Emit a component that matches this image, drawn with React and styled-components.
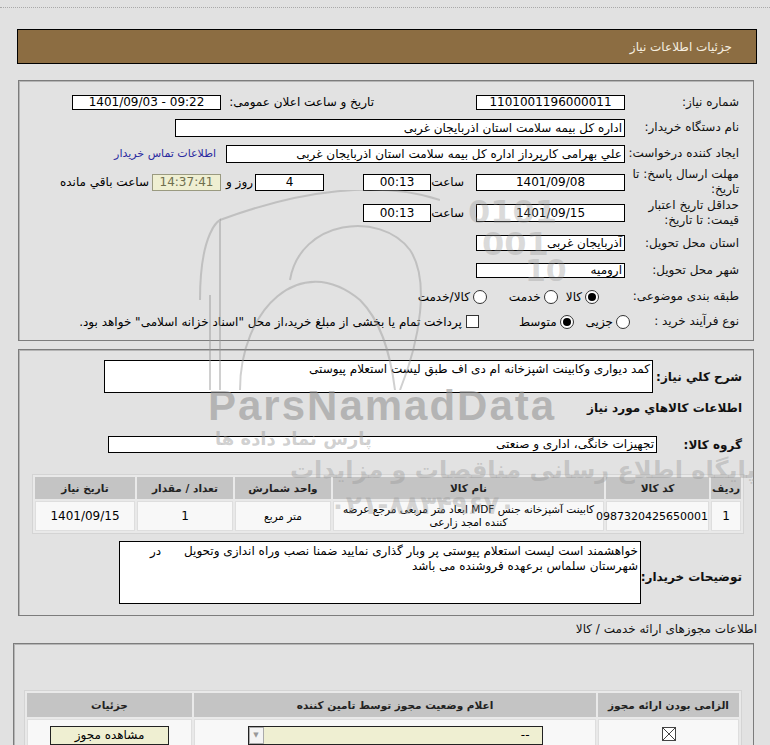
import React from 'react';
import styled, { createGlobalStyle } from 'styled-components';

const Global = createGlobalStyle`
  html, body { margin: 0; padding: 0; background: #e1e1e1; }
  body { font-family: "DejaVu Sans", Tahoma, sans-serif; font-size: 12px; color: #000; }
`;

const Page = styled.div`
  position: relative;
  direction: rtl;
  width: 770px;
  height: 745px;
  overflow: hidden;
  background: #e1e1e1;
  padding-top: 7px;
  box-sizing: border-box;
`;

const DottedRule = styled.div`
  border-top: 1px dotted #a9a9a9;
  margin-bottom: 21px;
`;

const TitleBar = styled.div`
  margin: 0 13px 0 17px;
  height: 35px;
  box-sizing: border-box;
  border: 1px solid #000;
  background: #8c6d42;
  color: #f6efe0;
  font-size: 12px;
  display: flex;
  align-items: center;
  padding-right: 24px;
`;

const Panel = styled.div`
  margin: ${p => p.$mt || 0}px ${p => p.$mr || 16}px 0 ${p => p.$ml || 18}px;
  border: 1px solid #7c7c7c;
  box-shadow: inset 1px 1px 0 #b5b5b5;
  background: #e2e2e2;
  padding: ${p => p.$pad};
  box-sizing: border-box;
  min-height: ${p => p.$minh || 0}px;
`;

const Row = styled.div`
  display: flex;
  align-items: center;
  height: ${p => p.$h}px;
  white-space: nowrap;
`;

const Label = styled.div`
  flex: none;
  width: 104px;
  margin-left: ${p => p.$gap ?? 10}px;
  text-align: right;
  line-height: 15px;
  font-size: 12px;
  color: #111;
`;

const Box = styled.div`
  flex: none;
  width: ${p => p.$w}px;
  height: ${p => p.$h || 17}px;
  margin-right: ${p => p.$mr || 0}px;
  box-sizing: border-box;
  border: 1px solid ${p => (p.$timer ? '#9a9a80' : '#000')};
  background: ${p => (p.$timer ? '#efefd2' : '#fff')};
  color: ${p => (p.$timer ? '#6e6e4e' : '#000')};
  text-align: ${p => p.$align || 'center'};
  direction: ${p => (p.$ltr ? 'ltr' : 'rtl')};
  line-height: ${p => (p.$h || 17) - 2}px;
  padding: 0 2px;
  overflow: hidden;
  font-size: 12px;
`;

const Text = styled.div`
  flex: none;
  width: ${p => (p.$w ? `${p.$w}px` : 'auto')};
  margin-right: ${p => p.$mr || 0}px;
  padding-right: ${p => p.$pr || 0}px;
  box-sizing: border-box;
  text-align: right;
  font-size: 12px;
`;

const Link = styled.a`
  margin-right: ${p => p.$mr || 0}px;
  color: #2a2aa0;
  text-decoration: none;
  font-size: 11px;
`;

const Option = styled.label`
  display: flex;
  align-items: center;
  margin-right: ${p => p.$mr || 0}px;
  font-size: 12px;
`;

const Radio = styled.span`
  flex: none;
  width: 12px;
  height: 12px;
  border-radius: 50%;
  border: 1px solid #333;
  background: #fff;
  margin-left: 3px;
  position: relative;
  &::after {
    content: '';
    display: ${p => (p.$on ? 'block' : 'none')};
    position: absolute;
    inset: 2px;
    border-radius: 50%;
    background: #000;
  }
`;

const Check = styled.span`
  flex: none;
  width: 11px;
  height: 11px;
  border: 1px solid #333;
  background: #fff;
  margin-left: 4px;
`;

const BlockRow = styled.div`
  display: flex;
  align-items: ${p => p.$align || 'center'};
  margin-top: ${p => p.$mt || 0}px;
  padding-right: 2px;
`;

const BoldLabel = styled.div`
  flex: none;
  width: ${p => p.$w}px;
  padding-top: ${p => p.$pt || 0}px;
  font-weight: bold;
  font-size: 12px;
  text-align: right;
  white-space: nowrap;
  color: #111;
`;

const TextArea = styled.div`
  flex: none;
  width: ${p => p.$w}px;
  height: ${p => p.$h}px;
  box-sizing: border-box;
  border: 1px solid #000;
  background: #fff;
  padding: ${p => p.$pad || '1px 2px'};
  font-size: 12px;
  line-height: 15px;
  text-align: right;
  overflow: hidden;
  white-space: nowrap;
`;

const Heading = styled.div`
  margin-top: ${p => p.$mt || 0}px;
  padding-right: 2px;
  font-weight: bold;
  font-size: 12px;
  line-height: 14px;
  color: #111;
`;

const Table = styled.table`
  width: 100%;
  margin-top: ${p => p.$mt || 0}px;
  border-collapse: separate;
  border-spacing: 2px;
  background: #e9e9e9;
  border: 1px solid #d4d4d4;
  table-layout: fixed;
`;

const Th = styled.th`
  width: ${p => (p.$w ? `${p.$w}px` : 'auto')};
  height: ${p => p.$h || 22}px;
  background: #c4c4c4;
  font-weight: bold;
  font-size: 10.5px;
  color: #222;
  text-align: center;
  padding: 0;
`;

const Td = styled.td`
  height: ${p => p.$h || 28}px;
  background: #f8f8f8;
  border: 1px solid #dedede;
  text-align: center;
  font-size: ${p => p.$fs || 12}px;
  line-height: 13px;
  padding: 0 ${p => p.$px ?? 2}px;
  white-space: ${p => (p.$nowrap ? 'nowrap' : 'normal')};
`;

const Caption = styled.div`
  height: 27px;
  line-height: 27px;
  padding-right: 13px;
  font-size: 12px;
  color: #111;
`;

const Select = styled.div`
  display: flex;
  align-items: center;
  width: 295px;
  height: 19px;
  margin: 0 auto;
  box-sizing: border-box;
  border: 1px solid #222;
  background: #efefd2;
  padding-right: 12px;
  font-size: 12px;
`;

const SelectArrow = styled.span`
  margin-right: auto;
  width: 13px;
  height: 15px;
  border: 1px solid #aaa;
  background: #f4f4f4;
  display: flex;
  align-items: center;
  justify-content: center;
  color: #999;
  font-size: 7px;
`;

const Button = styled.div`
  width: 119px;
  height: 19px;
  margin: 0 auto;
  box-sizing: border-box;
  border: 1px solid #222;
  background: #efefd2;
  text-align: center;
  line-height: 17px;
  font-size: 12px;
`;

const Watermark = styled.div`
  position: absolute;
  left: ${p => p.$x}px;
  top: ${p => p.$y}px;
  font-family: ${p => (p.$latin ? '"Liberation Sans", Arial, sans-serif' : '"DejaVu Sans", sans-serif')};
  font-weight: bold;
  font-size: ${p => p.$fs}px;
  line-height: 1;
  color: ${p => p.$c || 'rgba(140,140,140,0.55)'};
  white-space: nowrap;
  pointer-events: none;
  direction: ltr;
  letter-spacing: ${p => p.$ls || 0}px;
`;

const WatermarkArt = styled.svg`
  position: absolute;
  left: 180px;
  top: 190px;
  pointer-events: none;
`;

export default function App() {
  return (
    <Page>
      <Global />
      <DottedRule />
      <TitleBar>جزئیات اطلاعات نیاز</TitleBar>

      <Panel $mt={16} $pad="8px 14px 6px 14px">
        <Row $h={26}>
          <Label>شماره نیاز:</Label>
          <Box $w={149} $h={15}>1101001196000011</Box>
          <Text $w={153} $mr={102}>تاریخ و ساعت اعلان عمومی:</Text>
          <Box $w={149} $h={15} $ltr>1401/09/03 - 09:22</Box>
        </Row>
        <Row $h={25}>
          <Label>نام دستگاه خریدار:</Label>
          <Box $w={450} $h={18} $align="right">اداره کل بیمه سلامت استان اذربایجان غربی</Box>
        </Row>
        <Row $h={27}>
          <Label>ایجاد کننده درخواست:</Label>
          <Box $w={399} $h={18} $align="right">علي بهرامی کارپرداز اداره کل بیمه سلامت استان اذربایجان غربی</Box>
          <Link $mr={10} href="#">اطلاعات تماس خریدار</Link>
        </Row>
        <Row $h={30}>
          <Label>مهلت ارسال پاسخ: تا<br />تاریخ:</Label>
          <Box $w={149} $h={17}>1401/09/08</Box>
          <Text $w={45} $pr={12}>ساعت</Text>
          <Box $w={68} $h={17}>00:13</Box>
          <Box $w={69} $h={17} $mr={39}>4</Box>
          <Text $w={34} $pr={2}>روز و</Text>
          <Box $w={69} $h={17} $timer>14:37:41</Box>
          <Text $pr={3}>ساعت باقي مانده</Text>
        </Row>
        <Row $h={32}>
          <Label>حداقل تاریخ اعتبار<br />قیمت: تا تاریخ:</Label>
          <Box $w={149} $h={18}>1401/09/15</Box>
          <Text $w={45} $pr={12}>ساعت</Text>
          <Box $w={68} $h={18}>00:13</Box>
        </Row>
        <Row $h={28}>
          <Label>استان محل تحویل:</Label>
          <Box $w={149} $h={16} $align="right">آذربایجان غربی</Box>
        </Row>
        <Row $h={27}>
          <Label>شهر محل تحویل:</Label>
          <Box $w={149} $h={15} $align="right">ارومیه</Box>
        </Row>
        <Row $h={25}>
          <Label>طبقه بندی موضوعی:</Label>
          <Option $mr={26}><Radio $on />کالا</Option>
          <Option $mr={8}><Radio />خدمت</Option>
          <Option $mr={22}><Radio />کالا/خدمت</Option>
        </Row>
        <Row $h={25}>
          <Label $gap={5}>نوع فرآیند خرید :</Label>
          <Option><Radio />جزیی</Option>
          <Option $mr={12}><Radio $on />متوسط</Option>
          <Option $mr={40}><Check />پرداخت تمام یا بخشی از مبلغ خرید،از محل "اسناد خزانه اسلامی" خواهد بود.</Option>
        </Row>
      </Panel>

      <Panel $mt={8} $pad="10px 9px 11px 13px">
        <BlockRow>
          <BoldLabel $w={89}>شرح کلي نیاز:</BoldLabel>
          <TextArea $w={549} $h={33}>کمد دیواری وکابینت اشپزخانه ام دی اف طبق لیست استعلام پیوستی</TextArea>
        </BlockRow>
        <Heading $mt={8}>اطلاعات کالاهاي مورد نیاز</Heading>
        <BlockRow $mt={21}>
          <BoldLabel $w={85}>گروه کالا:</BoldLabel>
          <TextArea $w={549} $h={17} $pad="0 2px">تجهیزات خانگی، اداری و صنعتی</TextArea>
        </BlockRow>
        <Table $mt={21}>
          <thead>
            <tr>
              <Th $w={30}>ردیف</Th>
              <Th $w={103}>کد کالا</Th>
              <Th>نام کالا</Th>
              <Th $w={96}>واحد شمارش</Th>
              <Th $w={96}>تعداد / مقدار</Th>
              <Th $w={100}>تاریخ نیاز</Th>
            </tr>
          </thead>
          <tbody>
            <tr>
              <Td>1</Td>
              <Td $fs={11} $px={0} $nowrap>0987320425650001</Td>
              <Td $fs={10.5}>کابینت آشپزخانه جنس MDF ابعاد متر مربعی مرجع عرضه کننده امجد زارعی</Td>
              <Td $fs={10.5}>متر مربع</Td>
              <Td>1</Td>
              <Td>1401/09/15</Td>
            </tr>
          </tbody>
        </Table>
        <BlockRow $mt={7}>
          <BoldLabel $w={101} $pt={8}>توضیحات خریدار:</BoldLabel>
          <TextArea $w={522} $h={63} $pad="2px 2px">
            خواهشمند است لیست استعلام پیوستی پر وبار گذاری نمایید ضمنا نصب وراه اندازی وتحویل &nbsp;&nbsp;&nbsp;&nbsp; در
            <br />
            شهرستان سلماس برعهده فروشنده می باشد
          </TextArea>
        </BlockRow>
      </Panel>

      <Caption>اطلاعات مجوزهای ارائه خدمت / کالا</Caption>

      <Panel $mr={16} $ml={13} $pad="46px 11px 0 10px" $minh={110}>
        <Table>
          <thead>
            <tr>
              <Th $w={141} $h={24}>الزامی بودن ارائه مجوز</Th>
              <Th $h={24}>اعلام وضعیت مجوز توسط تامین کننده</Th>
              <Th $w={165} $h={24}>جزئیات</Th>
            </tr>
          </thead>
          <tbody>
            <tr>
              <Td $h={30}>
                <svg width="14" height="14" viewBox="0 0 14 14">
                  <rect x="0.5" y="0.5" width="13" height="13" fill="#fff" stroke="#444" />
                  <path d="M1 1L13 13M13 1L1 13" stroke="#444" strokeWidth="1" />
                </svg>
              </Td>
              <Td $h={30}>
                <Select>--<SelectArrow>▼</SelectArrow></Select>
              </Td>
              <Td $h={30}>
                <Button>مشاهده مجوز</Button>
              </Td>
            </tr>
          </tbody>
        </Table>
      </Panel>

      <WatermarkArt width="260" height="200" viewBox="0 0 260 200">
        <g fill="none" stroke="rgba(150,150,150,0.45)" strokeWidth="2">
          <path d="M20 110 C 20 40, 40 30, 40 30 L 40 200" />
          <path d="M30 105 L 30 200" />
          <path d="M40 30 C 120 0, 200 -10, 260 10" />
          <path d="M60 200 C 60 120, 120 60, 180 110 C 200 130, 210 160, 215 200" />
          <path d="M110 90 C 120 30, 200 20, 230 60 C 250 90, 240 150, 220 200" />
        </g>
      </WatermarkArt>
      <Watermark $x={468} $y={196} $fs={32} $c="rgba(150,150,150,0.35)">0101</Watermark>
      <Watermark $x={482} $y={228} $fs={32} $c="rgba(150,150,150,0.35)">001</Watermark>
      <Watermark $x={525} $y={256} $fs={30} $c="rgba(150,150,150,0.35)">10</Watermark>
      <Watermark $latin $x={208} $y={385} $fs={42} $ls={2} $c="rgba(150,150,150,0.6)">ParsNamadData</Watermark>
      <Watermark $x={215} $y={430} $fs={18} $c="rgba(150,150,150,0.45)">پارس نماد داده ها</Watermark>
      <Watermark $x={290} $y={458} $fs={24} $c="rgba(150,150,150,0.4)">پایگاه اطلاع رسانی مناقصات و مزایدات</Watermark>
      <Watermark $x={330} $y={492} $fs={26} $c="rgba(150,150,150,0.4)">۰۲۱-۸۸۳۴۹۶۷۰</Watermark>
    </Page>
  );
}
